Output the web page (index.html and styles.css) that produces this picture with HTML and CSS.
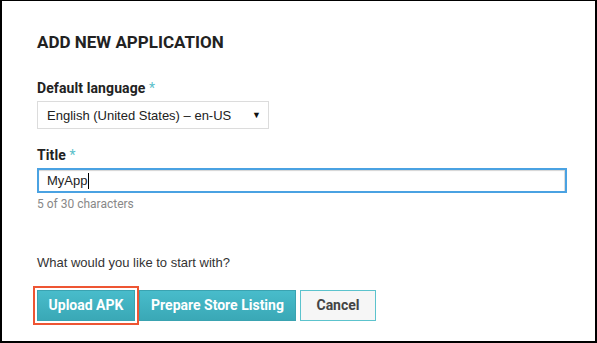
FILE: index.html
```html
<!DOCTYPE html>
<html>
<head>
<meta charset="utf-8">
<link rel="stylesheet" href="styles.css">
</head>
<body>
<div class="frame">
  <h1 class="title">ADD NEW APPLICATION</h1>

  <div class="label">Default language <span class="req">*</span></div>
  <div class="select">
    <span class="select-text">English (United States) – en-US</span>
    <span class="arrow">▼</span>
  </div>

  <div class="label label-title">Title <span class="req">*</span></div>
  <div class="input"><span class="input-text">MyApp</span><span class="caret"></span></div>
  <div class="hint">5 of 30 characters</div>

  <div class="question">What would you like to start with?</div>

  <div class="actions">
    <button class="btn btn-primary btn-upload">Upload APK</button>
    <button class="btn btn-primary btn-listing">Prepare Store Listing</button>
    <button class="btn btn-default">Cancel</button>
  </div>
</div>
</body>
</html>
```

FILE: styles.css
```css
html, body {
  margin: 0;
  padding: 0;
  background: #fff;
}

.frame {
  box-sizing: border-box;
  width: 597px;
  height: 343px;
  border-style: solid;
  border-color: #000;
  border-width: 1px 2px 2px 2px;
  padding: 31px 0 0 35px;
  font-family: "Liberation Sans", Arial, sans-serif;
  color: #333;
}

.title {
  margin: 0;
  font-family: Roboto, "Liberation Sans", sans-serif;
  font-weight: 700;
  font-size: 17px;
  line-height: 20px;
  color: #222;
}

.label {
  margin-top: 27px;
  font-family: Roboto, "Liberation Sans", sans-serif;
  font-weight: 700;
  font-size: 14px;
  line-height: 18px;
  color: #222;
  letter-spacing: 0.1px;
}

.label-title {
  margin-top: 17px;
}

.req {
  color: #5bbfca;
  font-weight: 400;
}

.select {
  box-sizing: border-box;
  margin-top: 4px;
  width: 232px;
  height: 28px;
  border: 1px solid #dcdcdc;
  padding: 0 0 0 9px;
  display: flex;
  align-items: center;
  justify-content: space-between;
  font-size: 13px;
  line-height: 27px;
  color: #222;
}

.arrow {
  font-size: 9px;
  margin-right: 7px;
  color: #111;
  line-height: 10px;
}

.input {
  box-sizing: border-box;
  margin-top: 4px;
  width: 530px;
  height: 25px;
  border: 2px solid #4aa2e2;
  box-shadow: inset 0 1px 1px #d4d4d4, inset -1px 0 0 #ddd;
  padding: 1px 0 0 8px;
  display: flex;
  align-items: center;
  font-size: 13px;
  line-height: 20px;
  color: #222;
}

.caret {
  width: 1px;
  height: 16px;
  background: #000;
  margin-left: 1px;
}

.hint {
  margin-top: 3px;
  font-family: Roboto, "Liberation Sans", sans-serif;
  font-size: 12px;
  line-height: 16px;
  color: #888;
}

.question {
  margin-top: 43px;
  font-size: 13px;
  line-height: 16px;
  color: #333;
}

.actions {
  margin-top: 19px;
  display: flex;
  gap: 4px;
}

.btn {
  box-sizing: border-box;
  height: 31px;
  margin: 0;
  padding: 0;
  white-space: nowrap;
  text-align: center;
  font-family: Roboto, "Liberation Sans", sans-serif;
  font-weight: 700;
  font-size: 14px;
  line-height: 29px;
  letter-spacing: 0;
  border-radius: 0;
  cursor: pointer;
}

.btn-primary {
  color: #fff;
  border: 1px solid #3aa3b1;
  background: linear-gradient(#48bccb, #3aa8b6);
}

.btn-upload {
  width: 98px;
  outline: 2px solid #ee5533;
  outline-offset: 2px;
}

.btn-listing {
  width: 157px;
}

.btn-default {
  width: 76px;
  color: #444;
  border: 1px solid #5cc3cd;
  background: #f6f6f6;
}
```
